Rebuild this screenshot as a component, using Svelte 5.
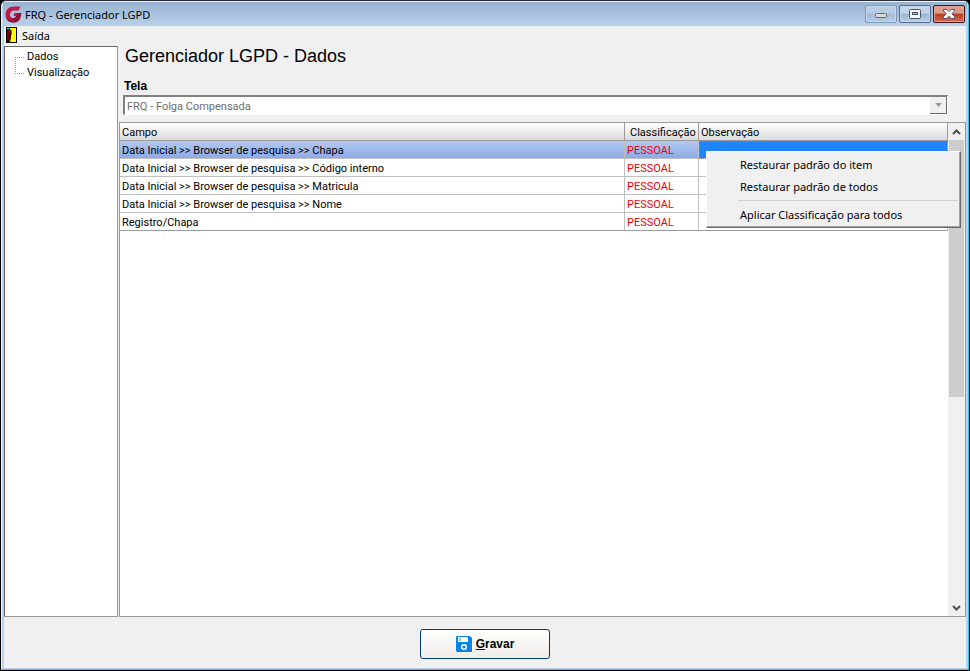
<script lang="ts">
	type Campo = {
		id: number;
		nome: string;
		classificacao: string;
		observacao: string;
	};

	const arvore = ['Dados', 'Visualização'];

	const campos: Campo[] = [
		{ id: 1, nome: 'Data Inicial >> Browser de pesquisa >> Chapa', classificacao: 'PESSOAL', observacao: '' },
		{ id: 2, nome: 'Data Inicial >> Browser de pesquisa >> Código interno', classificacao: 'PESSOAL', observacao: '' },
		{ id: 3, nome: 'Data Inicial >> Browser de pesquisa >> Matricula', classificacao: 'PESSOAL', observacao: '' },
		{ id: 4, nome: 'Data Inicial >> Browser de pesquisa >> Nome', classificacao: 'PESSOAL', observacao: '' },
		{ id: 5, nome: 'Registro/Chapa', classificacao: 'PESSOAL', observacao: '' }
	];

	let selecionado = $state(1);
	let menuAberto = $state(true);

	function abrirMenu(e: MouseEvent, id: number): void {
		e.preventDefault();
		selecionado = id;
		menuAberto = true;
	}

	function fecharMenu(): void {
		menuAberto = false;
	}
</script>

<div class="janela">
	<header class="titulo">
		<svg class="logo" width="17" height="17" viewBox="0 0 17 17" aria-hidden="true">
			<path
				d="M15.500 0.500 L13.500 4.500 H9 C6.500 4.500 5 6.200 5 8.500 C5 10.800 6.300 12 8.300 12 C10 12 11 11.400 11.500 10 H8.500 L9.500 7 H16.300 L15.500 11 C14.700 14.600 12.500 16.500 8.500 16.500 C3.500 16.500 0.500 13.500 0.500 8.800 C0.500 3.800 3.800 0.500 9 0.500 Z"
				fill="#c01a48"
			/>
			<path
				d="M12.500 7 H16.300 L15.500 11 C14.700 14.600 12.500 16.500 8.500 16.500 C5 16.500 2.500 15 1.300 12.500 C5 14.500 10.500 13.500 12.500 7 Z"
				fill="#8f1238"
			/>
		</svg>
		<span class="titulo-texto">FRQ - Gerenciador LGPD</span>
		<div class="controles">
			<button class="controle" aria-label="Minimizar">
				<svg width="12" height="10" viewBox="0 0 12 10">
					<rect x="0.500" y="4.500" width="11" height="4" rx="1" fill="#dcd9d4" stroke="#646b78" />
				</svg>
			</button>
			<button class="controle ativo" aria-label="Maximizar">
				<svg width="12" height="10" viewBox="0 0 12 10">
					<rect x="0.500" y="0.500" width="11" height="9" rx="1" fill="#f5f5f5" stroke="#4b5468" />
					<rect x="3.500" y="3.500" width="5" height="2" fill="#a9bfda" stroke="#4b5468" />
				</svg>
			</button>
			<button class="controle fechar" aria-label="Fechar">
				<svg width="12" height="10" viewBox="0 0 12 10">
					<path
						d="M0.500 0.500 H4 L6 2.500 L8 0.500 H11.500 V2 L8.800 4.800 L11.500 7.500 V9.500 H8 L6 7.200 L4 9.500 H0.500 V7.500 L3.200 4.800 L0.500 2 Z"
						fill="#f5f5f5"
						stroke="#5b5363"
					/>
				</svg>
			</button>
		</div>
	</header>

	<div class="conteudo">
		<nav class="barra">
			<button class="saida">
				<svg width="11" height="16" viewBox="0 0 11 16" aria-hidden="true">
					<rect width="11" height="16" fill="#000" />
					<rect x="4" y="1" width="6" height="14" fill="#ff0" />
					<path d="M1 1 L5 3 V11 L4 15 L1 13 Z" fill="#800000" />
					<path d="M1 1 H3 V2 H1 Z" fill="#0ff" />
					<path d="M5 3 V8 H4 V11 M4 12 L1 15" fill="none" stroke="#000" />
				</svg>
				Saída
			</button>
		</nav>

		<div class="corpo">
			<ul class="arvore">
				{#each arvore as item (item)}
					<li><button>{item}</button></li>
				{/each}
			</ul>

			<main class="painel">
				<h1>Gerenciador LGPD - Dados</h1>
				<label for="tela">Tela</label>
				<div class="combo">
					<select id="tela" disabled>
						<option>FRQ - Folga Compensada</option>
					</select>
					<span class="seta">
						<svg width="7" height="4" viewBox="0 0 7 4"><path d="M0 0 H7 L3.500 4 Z" fill="#9a9a9a" /></svg>
					</span>
				</div>

				<div class="grade">
					<div class="tabela">
						<table>
							<thead>
								<tr>
									<th class="campo">Campo</th>
									<th class="classificacao">Classificação</th>
									<th class="observacao">Observação</th>
								</tr>
							</thead>
							<tbody>
								{#each campos as c (c.id)}
									<tr
										class:selecionado={c.id === selecionado}
										onclick={() => (selecionado = c.id)}
										oncontextmenu={(e) => abrirMenu(e, c.id)}
									>
										<td>{c.nome}</td>
										<td class="tipo">{c.classificacao}</td>
										<td class="obs">{c.observacao}</td>
									</tr>
								{/each}
							</tbody>
						</table>
					</div>

					<div class="rolagem">
						<button aria-label="Rolar para cima">
							<svg width="9" height="6" viewBox="0 0 9 6">
								<path d="M1 5 L4.500 1.500 L8 5" fill="none" stroke="#505050" stroke-width="2" />
							</svg>
						</button>
						<div class="trilho"><div class="polegar"></div></div>
						<button aria-label="Rolar para baixo">
							<svg width="9" height="6" viewBox="0 0 9 6">
								<path d="M1 1 L4.500 4.500 L8 1" fill="none" stroke="#505050" stroke-width="2" />
							</svg>
						</button>
					</div>

					{#if menuAberto}
						<div class="menu" role="menu">
							<button role="menuitem" onclick={fecharMenu}>Restaurar padrão do item</button>
							<button role="menuitem" onclick={fecharMenu}>Restaurar padrão de todos</button>
							<hr />
							<button role="menuitem" onclick={fecharMenu}>Aplicar Classificação para todos</button>
						</div>
					{/if}
				</div>
			</main>
		</div>

		<footer>
			<button class="gravar">
				<svg width="16" height="16" viewBox="0 0 16 16" aria-hidden="true">
					<path d="M1 0 H14 L16 2 V16 H1 L0 15 V1 Z" fill="#0a84e8" />
					<rect x="2" y="1" width="10" height="5" fill="#fff" />
					<rect x="3" y="2" width="2" height="3" fill="#8cc8f8" />
					<circle cx="8" cy="11" r="2.300" fill="#0a84e8" stroke="#fff" stroke-width="1.500" />
				</svg>
				<span><u>G</u>ravar</span>
			</button>
		</footer>
	</div>
</div>

<style>
	:global(body) {
		background: #000;
	}

	.janela {
		display: flex;
		flex-direction: column;
		box-sizing: border-box;
		min-height: 100vh;
		padding: 0 2px 2px;
		border: 1px solid #000;
		border-top-color: #2b2b33;
		border-radius: 6px 6px 0 0;
		background: #b9d1ea;
		box-shadow: inset -1px -1px #35c5ee, inset 1px 1px #eef4fa;
		font-family: Roboto, 'Liberation Sans', Arial, sans-serif;
		font-size: 11px;
		color: #000;
	}

	button {
		font: inherit;
		color: inherit;
		padding: 0;
		border: none;
		background: none;
	}

	svg {
		display: block;
		flex: none;
	}

	.titulo {
		display: flex;
		align-items: center;
		gap: 3px;
		height: 24px;
		padding: 0 2px;
		margin-top: 1px;
		box-sizing: border-box;
		background: linear-gradient(#98b2d1, #b9d1ea);
	}

	.titulo-texto,
	.saida,
	.menu {
		font-family: 'Noto Sans', 'Open Sans', sans-serif;
		font-size: 11px;
	}

	.controles {
		display: flex;
		gap: 2px;
		margin-left: auto;
	}

	.controle {
		display: grid;
		place-items: center;
		width: 32px;
		height: 18px;
		border: 1px solid #8298b5;
		border-radius: 2px;
		background: linear-gradient(#b8cce3 45%, #a3bcd9 50%, #b5cde8);
		box-shadow: inset 0 0 0 1px #c5d8ec;
	}

	.controle.ativo {
		border-color: #566a87;
		background: linear-gradient(#c3d4e8 45%, #9ab5d3 50%, #b9d3ee);
	}

	.controle.fechar {
		border-color: #43101b;
		background: linear-gradient(#dd9b8b 45%, #b93a22 50%, #cf6a50);
		box-shadow: inset 0 0 0 1px #e0a597;
	}

	.conteudo {
		flex: 1;
		display: flex;
		flex-direction: column;
		margin: 0 1px;
		background: #f0f0f0;
	}

	.barra {
		height: 20px;
	}

	.saida {
		display: flex;
		align-items: center;
		gap: 5px;
		height: 18px;
		padding-left: 2px;
	}

	.corpo {
		flex: 1;
		display: flex;
		gap: 1px;
	}

	.arvore {
		box-sizing: border-box;
		width: 114px;
		margin: 0;
		padding: 2px 0 0 10px;
		border: 1px solid #9a9a9a;
		border-top-color: #696969;
		border-left-color: #696969;
		background: #fff;
		list-style: none;
	}

	.arvore li {
		position: relative;
		height: 16px;
		padding-left: 12px;
		line-height: 16px;
	}

	.arvore li::before {
		content: '';
		position: absolute;
		left: 0;
		top: 0;
		width: 8px;
		height: 8px;
		border-left: 1px dotted #a0a0a0;
		border-bottom: 1px dotted #a0a0a0;
	}

	.arvore li:first-child::before {
		top: 8px;
		border-bottom: none;
		border-top: 1px dotted #a0a0a0;
	}

	.painel {
		flex: 1;
		min-width: 0;
		display: flex;
		flex-direction: column;
	}

	h1 {
		margin: 0 0 0 6px;
		font-family: 'Liberation Sans', Arial, sans-serif;
		font-size: 18px;
		font-weight: normal;
		line-height: 20px;
	}

	label {
		margin: 12px 0 1px 5px;
		font-family: 'Liberation Sans', Arial, sans-serif;
		font-size: 12px;
		font-weight: bold;
		line-height: 16px;
	}

	.combo {
		position: relative;
		display: flex;
		margin: 0 18px 7px 4px;
	}

	select {
		appearance: none;
		flex: 1;
		height: 20px;
		padding: 1px 2px 0;
		border: 1px solid #fff;
		border-top: 2px solid #808080;
		border-left: 2px solid #808080;
		border-radius: 0;
		background: #fff;
		color: #6d6d6d;
		font: inherit;
		opacity: 1;
	}

	.seta {
		position: absolute;
		top: 2px;
		right: 1px;
		bottom: 1px;
		width: 16px;
		display: grid;
		place-items: center;
		border-right: 1px solid #696969;
		border-bottom: 1px solid #696969;
		background: #f0f0f0;
		pointer-events: none;
	}

	.grade {
		position: relative;
		flex: 1;
		display: flex;
		border: 1px solid #9a9a9a;
		background: #fff;
	}

	.tabela {
		flex: 1;
		min-width: 0;
	}

	table {
		width: 100%;
		table-layout: fixed;
		border-spacing: 0;
	}

	th,
	td {
		box-sizing: border-box;
		height: 18px;
		padding: 2px 2px 0;
		border-right: 1px solid #c0c0c0;
		border-bottom: 1px solid #c0c0c0;
		line-height: 15px;
		text-align: left;
		white-space: nowrap;
	}

	th {
		border-color: #9a9a9a;
		background: linear-gradient(#fff, #dcdcdc);
		font-weight: normal;
	}

	.classificacao {
		width: 74px;
		padding-left: 5px;
	}

	.observacao {
		width: 249px;
	}

	tbody tr:last-child td {
		border-bottom-color: #9a9a9a;
	}

	.tipo {
		color: #f00000;
	}

	.selecionado td {
		background: linear-gradient(#b4c9f0, #8daae8);
	}

	.selecionado .obs {
		background: #1e84ff;
		outline: 1px dotted #c87820;
		outline-offset: -1px;
	}

	.rolagem {
		display: flex;
		flex-direction: column;
		width: 17px;
		background: #f0f0f0;
	}

	.rolagem button {
		display: grid;
		place-items: center;
		height: 17px;
	}

	.trilho {
		flex: 1;
	}

	.polegar {
		height: 56%;
		margin-right: 1px;
		margin-left: 1px;
		background: #cdcdcd;
	}

	.menu {
		position: absolute;
		top: 28px;
		right: 4px;
		box-sizing: border-box;
		width: 255px;
		padding: 1px 2px 2px;
		border: 1px solid #fff;
		border-right-color: #696969;
		border-bottom-color: #696969;
		background: #f0f0f0;
		box-shadow: inset -1px -1px #a0a0a0;
	}

	.menu button {
		display: block;
		width: 100%;
		height: 22px;
		padding-left: 31px;
		text-align: left;
	}

	.menu button:hover {
		background: #91c9f7;
	}

	.menu hr {
		height: 1px;
		margin: 3px 0 2px 29px;
		border: none;
		background: #d0d0d0;
	}

	footer {
		display: flex;
		justify-content: center;
		padding: 12px 0 9px;
	}

	.gravar {
		display: flex;
		align-items: center;
		justify-content: center;
		gap: 4px;
		width: 130px;
		height: 30px;
		border: 1px solid #003c74;
		border-radius: 3px;
		background: linear-gradient(#fff, #f0ece8);
		font-family: 'Liberation Sans', Arial, sans-serif;
		font-size: 12px;
		font-weight: bold;
	}
</style>
